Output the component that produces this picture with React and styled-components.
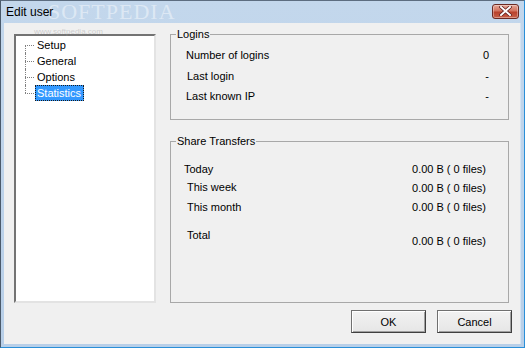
import React from 'react';
import styled, { createGlobalStyle } from 'styled-components';

const GlobalStyle = createGlobalStyle`
  html, body {
    margin: 0;
    padding: 0;
    background: #ffffff;
  }
  body {
    font-family: Tahoma, "Liberation Sans", Arial, sans-serif;
    font-size: 11px;
    color: #000;
  }
`;

const treeItems = ['Setup', 'General', 'Options', 'Statistics'];

const logins = [
  { label: 'Number of logins', value: '0', left: 15 },
  { label: 'Last login', value: '-', left: 16 },
  { label: 'Last known IP', value: '-', left: 15 },
];

const transfers = [
  { label: 'Today', value: '0.00 B ( 0 files)', left: 13, labelShift: 0, gap: 0 },
  { label: 'This week', value: '0.00 B ( 0 files)', left: 16, labelShift: -1, gap: 0 },
  { label: 'This month', value: '0.00 B ( 0 files)', left: 16, labelShift: 0, gap: 0 },
  { label: 'Total', value: '0.00 B ( 0 files)', left: 16, labelShift: -6, gap: 15 },
];

function App() {
  const [selected, setSelected] = React.useState('Statistics');

  return (
    <>
      <GlobalStyle />
      <Window>
        <TitleBar>
          <Title>Edit user</Title>
          <Watermark>SOFTPEDIA</Watermark>
          <CloseButton aria-label="Close">
            <svg width="13" height="10" viewBox="0 0 13 10">
              <path d="M2 1 L11 9 M11 1 L2 9" stroke="#5a1a1a" strokeWidth="3.4" strokeLinecap="square" />
              <path d="M2 1 L11 9 M11 1 L2 9" stroke="#ffffff" strokeWidth="2" strokeLinecap="square" />
            </svg>
          </CloseButton>
        </TitleBar>
        <Client>
          <Main>
            <Tree>
              <SmallMark>www.softpedia.com</SmallMark>
              {treeItems.map((item, i) => (
                <TreeRow key={item} first={i === 0} last={i === treeItems.length - 1}>
                  <Branch />
                  <TreeLabel selected={selected === item} onClick={() => setSelected(item)}>
                    {item}
                  </TreeLabel>
                </TreeRow>
              ))}
            </Tree>
            <Panels>
              <Group height={92} lift>
                <Legend>Logins</Legend>
                {logins.map((row) => (
                  <StatRow key={row.label}>
                    <StatLabel left={row.left}>{row.label}</StatLabel>
                    <StatValue>{row.value}</StatValue>
                  </StatRow>
                ))}
              </Group>
              <Group height={168}>
                <Legend>Share Transfers</Legend>
                {transfers.map((row) => (
                  <TransferRow key={row.label} gap={row.gap}>
                    <StatLabel left={row.left} shift={row.labelShift}>{row.label}</StatLabel>
                    <TransferValue>{row.value}</TransferValue>
                  </TransferRow>
                ))}
              </Group>
            </Panels>
          </Main>
          <Footer>
            <DialogButton>OK</DialogButton>
            <DialogButton>Cancel</DialogButton>
          </Footer>
        </Client>
      </Window>
    </>
  );
}

const Window = styled.div`
  width: 525px;
  height: 348px;
  box-sizing: border-box;
  display: flex;
  flex-direction: column;
  background: linear-gradient(#c3d7ec, #b8cfe8);
  border-left: 1px solid #4b5a6b;
  border-top: 1px solid #5d6d80;
  border-right: 1px solid #2a8fd8;
  border-bottom: 1px solid #2a8fd8;
  padding: 0 3px 3px 3px;
`;

const TitleBar = styled.div`
  height: 22px;
  display: flex;
  align-items: center;
  position: relative;
  padding-left: 2px;
`;

const Title = styled.span`
  font-family: Tahoma, "Liberation Sans", sans-serif;
  font-size: 12px;
  color: #000;
  position: relative;
  z-index: 1;
`;

const Watermark = styled.span`
  position: absolute;
  left: 44px;
  top: -2px;
  font-family: "Liberation Serif", serif;
  font-size: 22px;
  letter-spacing: 1px;
  color: rgba(255, 255, 255, 0.45);
  pointer-events: none;
`;

const SmallMark = styled.span`
  position: absolute;
  left: 18px;
  top: -9px;
  font-family: "Liberation Sans", sans-serif;
  font-size: 8px;
  color: rgba(160, 160, 160, 0.45);
  pointer-events: none;
`;

const CloseButton = styled.button`
  margin-left: auto;
  margin-right: 2px;
  margin-top: -2px;
  width: 27px;
  height: 15px;
  padding: 0;
  display: flex;
  align-items: center;
  justify-content: center;
  border: 1px solid #6b2a24;
  border-radius: 3px;
  background: linear-gradient(#e5a596 0%, #d2735f 45%, #b9412c 55%, #c7614a 100%);
  box-shadow: inset 0 0 0 1px rgba(255, 255, 255, 0.35);
`;

const Client = styled.div`
  flex: 1;
  display: flex;
  flex-direction: column;
  background: #f0f0f0;
  padding: 11px 7px 0 10px;
  border-right: 1px solid #d4e3f2;
`;

const Main = styled.div`
  display: flex;
  gap: 14px;
  height: 269px;
`;

const Tree = styled.div`
  width: 142px;
  box-sizing: border-box;
  background: #fff;
  border-top: 2px solid #737373;
  border-left: 2px solid #737373;
  border-right: 2px solid #e3e3e3;
  border-bottom: 2px solid #e3e3e3;
  padding: 1px 0 0 9px;
  position: relative;
`;

const TreeRow = styled.div`
  height: 16px;
  display: flex;
  align-items: center;
  position: relative;
  &::before {
    content: '';
    position: absolute;
    left: 0;
    top: ${(p) => (p.first ? '8px' : '0')};
    height: ${(p) => (p.first || p.last ? '8px' : '16px')};
    border-left: 1px dotted #7f7f7f;
  }
`;

const Branch = styled.span`
  width: 9px;
  margin-right: 1px;
  border-top: 1px dotted #7f7f7f;
`;

const TreeLabel = styled.span`
  line-height: 14px;
  padding: 0 2px 0 1px;
  border: 1px ${(p) => (p.selected ? 'dotted #1a1a1a' : 'solid transparent')};
  background: ${(p) => (p.selected ? '#3399ff' : 'transparent')};
  color: ${(p) => (p.selected ? '#fff' : '#000')};
  cursor: default;
`;

const Panels = styled.div`
  width: 339px;
  display: flex;
  flex-direction: column;
  gap: 15px;
`;

const Group = styled.fieldset`
  margin: ${(p) => (p.lift ? '-6px' : '0')} 0 0 0;
  height: ${(p) => p.height}px;
  box-sizing: border-box;
  border: 1px solid #a8a8a8;
  padding: 0 19px 0 0;
  min-width: 0;
`;

const Legend = styled.legend`
  padding: 0 1px;
  margin-left: 5px;
  line-height: 13px;
`;

const StatRow = styled.div`
  display: flex;
  justify-content: space-between;
  align-items: center;
  height: 20.5px;
  &:first-of-type {
    margin-top: 4px;
  }
`;

const StatLabel = styled.span`
  padding-left: ${(p) => p.left}px;
  position: relative;
  top: ${(p) => p.shift || 0}px;
`;

const StatValue = styled.span`
  text-align: right;
`;

const TransferRow = styled.div`
  display: flex;
  justify-content: space-between;
  align-items: center;
  height: 19px;
  margin-top: ${(p) => p.gap}px;
  padding-right: 3px;
  &:first-of-type {
    margin-top: 11px;
  }
`;

const TransferValue = styled.span`
  white-space: pre;
`;

const Footer = styled.div`
  display: flex;
  justify-content: flex-end;
  gap: 11px;
  padding-top: 7px;
  padding-right: 1px;
`;

const DialogButton = styled.button`
  width: 75px;
  height: 23px;
  box-sizing: border-box;
  font-family: Tahoma, "Liberation Sans", sans-serif;
  font-size: 11px;
  color: #000;
  background: linear-gradient(#f2f2f2, #e6e6e6);
  border: 1px solid #707070;
  border-right-color: #404040;
  border-bottom-color: #404040;
  box-shadow: inset 1px 1px 0 #ffffff, inset -1px -1px 0 #a0a0a0;
  padding: 0;
`;

export default App;
